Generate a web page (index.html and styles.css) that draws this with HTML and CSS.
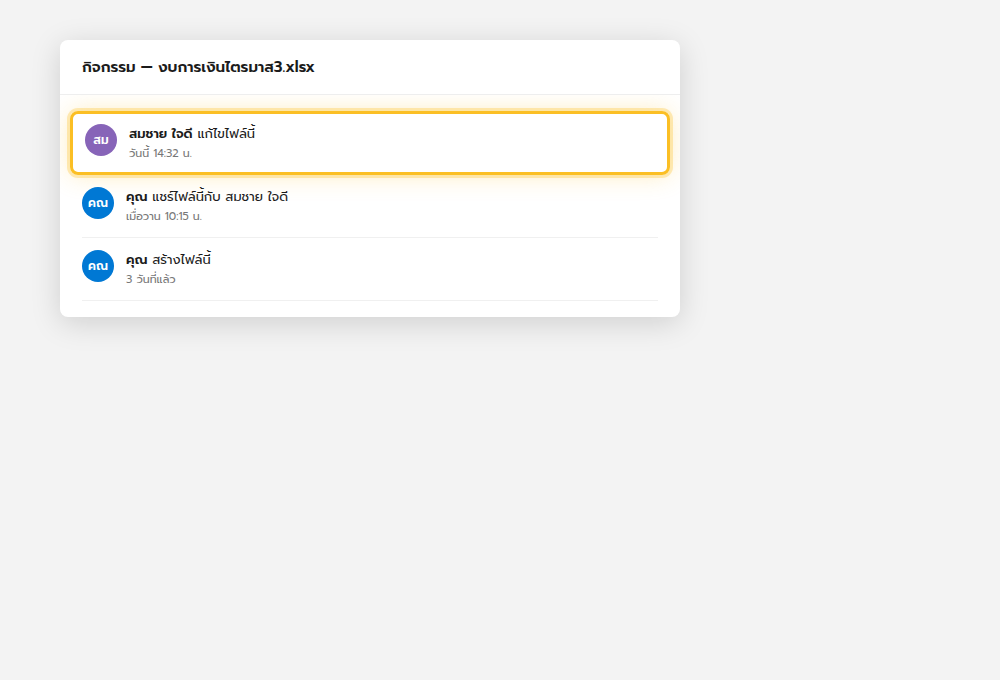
FILE: index.html
```html
<!DOCTYPE html>
<html lang="th">
  <head>
    <meta charset="UTF-8" />
    <meta name="viewport" content="width=device-width, initial-scale=1.0" />
    <title>กิจกรรม — งบการเงินไตรมาส3.xlsx</title>
    <link rel="stylesheet" href="styles.css">
  </head>

  <body>
    <main class="panel">
      <h1 class="panel-header">กิจกรรม — งบการเงินไตรมาส3.xlsx</h1>
      <ul class="activity-list">
        <li class="activity highlight">
          <div class="avatar purple">สม</div>
          <div class="details">
            <p class="action"><b>สมชาย ใจดี</b> แก้ไขไฟล์นี้</p>
            <p class="time">วันนี้ 14:32 น.</p>
          </div>
        </li>
        <li class="activity">
          <div class="avatar">คณ</div>
          <div class="details">
            <p class="action"><b>คุณ</b> แชร์ไฟล์นี้กับ สมชาย ใจดี</p>
            <p class="time">เมื่อวาน 10:15 น.</p>
          </div>
        </li>
        <li class="activity">
          <div class="avatar">คณ</div>
          <div class="details">
            <p class="action"><b>คุณ</b> สร้างไฟล์นี้</p>
            <p class="time">3 วันที่แล้ว</p>
          </div>
        </li>
      </ul>
    </main>
  </body>
</html>
```

FILE: styles.css
```css
* {
  box-sizing: border-box;
  margin: 0;
  padding: 0;
}

body {
  padding: 40px 60px;
  background: #f3f3f3;
  color: #1b1b1b;
  font-family: Prompt, Kanit, "Noto Sans Thai", "Noto Sans", sans-serif;
}

.panel {
  max-width: 620px;
  background: #fff;
  border-radius: 8px;
  box-shadow: 0 6px 30px rgba(0, 0, 0, 0.15);
}

.panel-header {
  padding: 16px 22px;
  border-bottom: 1px solid #eee;
  font-size: 15px;
  font-weight: 600;
  line-height: 22px;
}

/* keeps the highlight glow inside the list */
.activity-list {
  padding: 16px 22px;
  list-style: none;
  overflow: hidden;
}

.activity {
  display: flex;
  gap: 12px;
  padding: 12px 0 10px;
  border-bottom: 1px solid #f0f0f0;
}

.activity.highlight {
  margin: 0 -12px;
  padding: 10px 12px 8px;
  border: 3px solid #fbbf24;
  border-radius: 8px;
  box-shadow: 0 0 0 3px rgba(251, 191, 36, 0.3), 0 0 24px rgba(251, 191, 36, 0.3);
}

.avatar {
  display: flex;
  flex-shrink: 0;
  align-items: center;
  justify-content: center;
  width: 32px;
  height: 32px;
  border-radius: 50%;
  background: #0078d4;
  color: #fff;
  font-size: 12px;
  font-weight: 600;
}

.avatar.purple {
  background: #8764b8;
}

.action {
  font-size: 13px;
  line-height: 20px;
}

.action b {
  font-weight: 600;
}

.time {
  color: #777;
  font-size: 11px;
  line-height: 20px;
}
```
